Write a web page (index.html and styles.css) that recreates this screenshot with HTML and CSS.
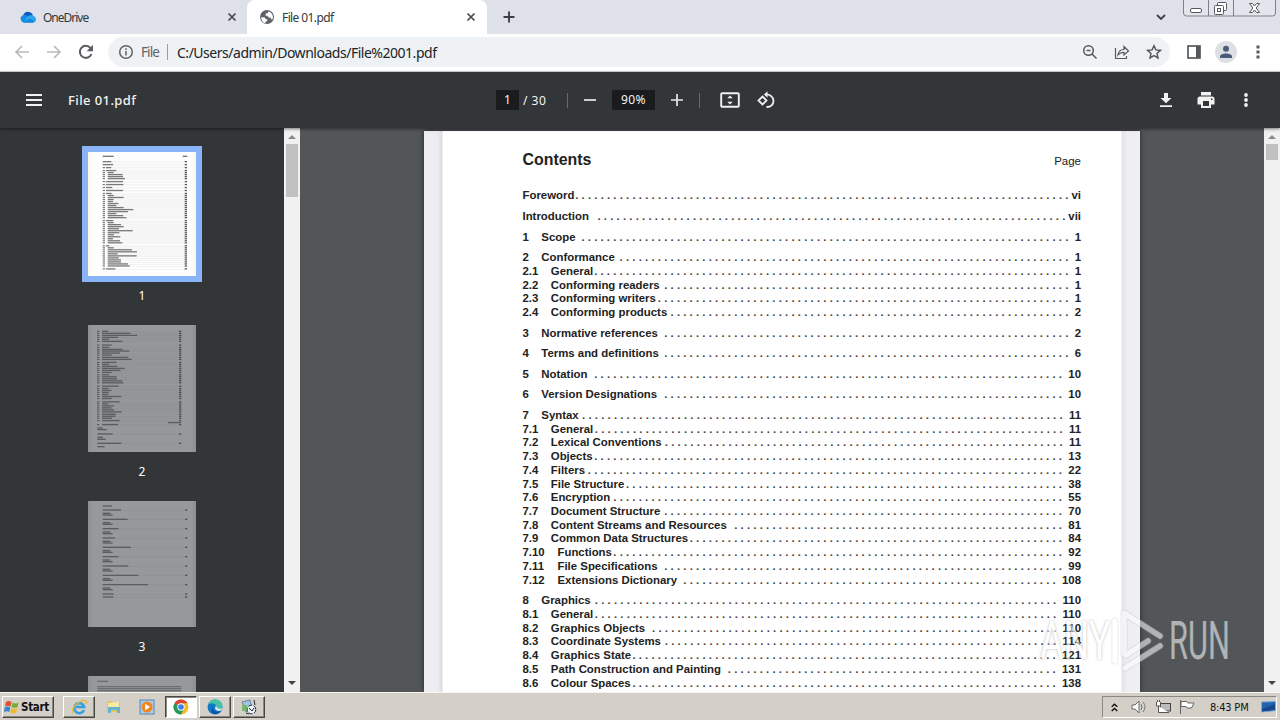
FILE: index.html
```html
<!DOCTYPE html>
<html lang="en">
<head>
<meta charset="utf-8">
<title>File 01.pdf</title>
<link rel="stylesheet" href="styles.css">
</head>
<body>
<div class="screen">
  <header class="tabs">
    <div class="tab tab-idle">
      <svg class="i16" viewBox="0 0 16 16"><path d="M3 7C4 2 10 1 13 6l-7 7z" fill="#0a5dbb"/><path d="M1 11c-2-4 4-7 7-3l5 5.500H4C2.500 13.500 1.400 12.500 1 11z" fill="#168ce0"/><path d="M7 8c3-3.500 9-1 9 2.500 0 2-1.300 3-3 3H4z" fill="#2aa7ee"/><path d="M3 13L10 9.500l5 3-2 1H4z" fill="#1489dc"/></svg>
      <span class="tab-title od">OneDrive</span>
      <svg class="x" viewBox="0 0 10 10"><path d="M1.500 1.500l7 7m0-7l-7 7"/></svg>
    </div>
    <div class="tab tab-active">
      <svg class="i16" viewBox="0 0 16 16"><circle cx="8" cy="8" r="7" fill="#5f6368"/><path d="M2.200 8.200L6 8.500l.5 1.500 2 .5-.3 1.500-1.700.8v1.400A6 6 0 0 1 2.200 8.200zM9.500 2.300L9 4 6.800 4.500 6.500 6.500 8.600 7l1 1.400 1.900.2 1 1.800 1 .1A6.200 6.200 0 0 0 9.500 2.300z" fill="#fff"/></svg>
      <span class="tab-title">File 01.pdf</span>
      <svg class="x" viewBox="0 0 10 10"><path d="M1.500 1.500l7 7m0-7l-7 7"/></svg>
    </div>
    <svg class="plus" viewBox="0 0 12 12"><path d="M6 .5v11M.5 6h11"/></svg>
    <svg class="chev" viewBox="0 0 10 6"><path d="M1 1l4 4 4-4"/></svg>
    <svg class="winctl" viewBox="0 0 94 17"><path d="M.5 0v13q0 3 3 3h86q3 0 3-3V0M25.500 0v16M50.500 0v16" fill="#e2e5eb" stroke="#7d8188"/><g fill="#fff" stroke="#55585e"><rect x="7.500" y="8.500" width="11" height="4" rx="1.500"/><rect x="34.500" y="2.500" width="9" height="8" rx="1"/><rect x="31.500" y="5.500" width="9" height="9" rx="1"/><rect x="34.500" y="8.500" width="3" height="3"/><path d="M66.500 3.500h3l2 2.500 2-2.500h3l-3.300 4.500 3.300 4.500h-3l-2-2.500-2 2.500h-3l3.300-4.500z"/></g></svg>
  </header>

  <nav class="address">
    <svg class="nav" viewBox="0 0 16 16"><path d="M15 8H2m6-6L2 8l6 6" stroke="#b8babd"/></svg>
    <svg class="nav" viewBox="0 0 16 16"><path d="M1 8h13M8 2l6 6-6 6" stroke="#b8babd"/></svg>
    <svg class="nav" viewBox="0 0 16 16"><path d="M13.500 10A6 6 0 1 1 12.500 4L14 5.500" stroke="#5a5e63" stroke-width="2"/><path d="M15 .8v6.400H8.700z" fill="#5a5e63"/></svg>
    <div class="omni">
      <svg class="info" viewBox="0 0 16 16"><circle cx="8" cy="8" r="6.300"/><path d="M8 7v4.600M8 4.300v1.600"/></svg>
      <span class="scheme">File</span><i class="bar"></i><span class="url">C:/Users/admin/Downloads/File%2001.pdf</span>
      <svg class="oi" viewBox="0 0 16 16"><circle cx="6.500" cy="6.500" r="4.800"/><path d="M10 10l4.500 4.500M4.500 6.500h4"/></svg>
      <svg class="oi" viewBox="0 0 16 16"><path d="M1.500 4v10.500h11V12M4 11c.5-4 2.500-5.500 6-5.500v-3l4.500 4.500L10 11V8.300c-3 0-4.500.7-6 2.700z" stroke-width="1.200"/></svg>
      <svg class="oi" viewBox="0 0 16 16"><path d="M8 1.800l1.900 4.100 4.500.5-3.400 3 1 4.500L8 11.600l-4 2.300 1-4.500-3.400-3 4.500-.5z"/></svg>
    </div>
    <svg class="side-i" viewBox="0 0 14 14"><rect x="1" y="1" width="12" height="12" fill="none" stroke="#55595e" stroke-width="1.700"/><path d="M9 1h4v12H9z" fill="#55595e"/></svg>
    <svg class="avatar" viewBox="0 0 22 22"><circle cx="11" cy="11" r="11" fill="#dcdfe4"/><circle cx="11" cy="7.800" r="3" fill="#4b5b7c"/><path d="M5 17v-1.500c0-4 12-4 12 0V17z" fill="#4b5b7c"/></svg>
    <svg class="dots" viewBox="0 0 4 14"><path d="M.5.500h3v3h-3zM.5 5.500h3v3h-3zM.5 10.500h3v3h-3z" fill="#55595e"/></svg>
  </nav>

  <div class="pdfbar">
    <svg class="menu" viewBox="0 0 16 12"><path d="M0 1h16M0 6h16M0 11h16"/></svg>
    <b class="fname">File 01.pdf</b>
    <div class="center">
      <span class="box pg">1</span><span class="total">/ 30</span><i class="sep s1"></i>
      <svg class="minus" viewBox="0 0 12 12"><path d="M0 6h12"/></svg>
      <span class="box zm">90%</span>
      <svg class="add" viewBox="0 0 12 12"><path d="M0 6h12M6 0v12"/></svg><i class="sep s2"></i>
      <svg class="fit" viewBox="0 0 20 16"><rect x="1.200" y="1.200" width="17.600" height="13.600" rx="1" fill="none" stroke="#f1f1f1" stroke-width="1.900"/><path d="M7.300 6.300L10 3.500l2.700 2.800zM7.300 9.700L10 12.500l2.700-2.800z" fill="#f1f1f1"/></svg>
      <svg class="rot" viewBox="0 0 18 18"><path d="M5.500 5.500l4 4-4 4-4-4zM8 3.500c11-1 11 13 1.500 12.500" fill="none" stroke="#f1f1f1" stroke-width="1.800"/><path d="M10.500.2v6.600L7 3.500z" fill="#f1f1f1"/></svg>
    </div>
    <svg class="dl" viewBox="0 0 12 14"><path d="M4 0h4v5h3.500L6 10.300.500 5H4zM0 12.200h12V14H0z"/></svg>
    <svg class="pr" viewBox="0 0 18 16"><path d="M4 0h10v3.500H4z"/><path fill-rule="evenodd" d="M3 4.500h12a2.500 2.500 0 0 1 2.500 2.500v5.500H14V16H4v-3.500H.5V7A2.500 2.500 0 0 1 3 4.500zM6 9v5h6V9zm8-2.500v1.500h1.500V6.500z"/></svg>
    <svg class="more" viewBox="0 0 4 14"><circle cx="2" cy="2" r="1.900"/><circle cx="2" cy="7" r="1.900"/><circle cx="2" cy="12" r="1.900"/></svg>
  </div>

  <main class="main">
    <aside class="thumbs">
      <div class="thumb selected"><svg id="t1" viewBox="54 51 324 372"></svg></div><span class="num">1</span>
      <div class="thumb dim"><svg id="t2" viewBox="54 30 324 380" preserveAspectRatio="none"></svg></div><span class="num">2</span>
      <div class="thumb dim third"><svg id="t3" viewBox="54 33 324 378"></svg></div><span class="num">3</span>
      <div class="thumb dim fourth"><svg id="t4" viewBox="54 558 324 378"></svg></div>
    </aside>
    <div class="scroll">
      <svg class="arr" viewBox="0 0 8 4"><path d="M0 4l4-4 4 4z" fill="#8b8b8b"/></svg><i class="grip tall"></i>
      <svg class="arr down" viewBox="0 0 8 4"><path d="M0 0l4 4 4-4z" fill="#444"/></svg>
    </div>
    <section class="viewer">
      <article class="page">
        <div class="head"><b>Contents</b><span>Page</span></div>
        <div id="toc" class="toc"></div>
      </article>
    </section>
    <div class="scroll">
      <svg class="arr" viewBox="0 0 8 4"><path d="M0 4l4-4 4 4z" fill="#8b8b8b"/></svg><i class="grip short"></i>
      <svg class="arr down" viewBox="0 0 8 4"><path d="M0 0l4 4 4-4z" fill="#444"/></svg>
    </div>
    <div class="mark">
      <span class="any">ANY</span>
      <svg viewBox="0 0 54 66"><g fill="none" stroke-linecap="round" stroke-linejoin="round"><path d="M4 13v40M13 46V5l36 23M14 60l35-22M15 47l22-14" stroke="#a9abb0" stroke-width="7" opacity=".5"/><path d="M4 13v40M13 46V5l36 23M14 60l35-22M15 47l22-14" stroke="#fff" stroke-width="5.500"/></g></svg>
      <span class="run">RUN</span>
    </div>
  </main>

  <footer class="taskbar">
    <div class="btn start"><svg viewBox="0 0 16 16"><path d="M2 3q3-2 5.500 0L6.500 7.500Q4 6 1 7.500z" fill="#df5030"/><path d="M8.500 3.500q3 2 6 0l-1 4.500q-3 1.500-6 0z" fill="#74ac35"/><path d="M.8 8.500q3-1.800 5.500 0l-1 4.500Q3 11.500 0 13z" fill="#3b82cc"/><path d="M7.300 9q3 1.700 6 0l-1 4.500q-3 1.700-6 0z" fill="#f0b82c"/></svg><b>Start</b></div>
    <div class="btn ie"><svg viewBox="0 0 16 16"><path d="M13 11A5 5 0 1 1 13.200 8H5" fill="none" stroke="#35a2df" stroke-width="2.600"/><path d="M2 14C-2 10 10 0 15 2c1 .5.500 2 0 3" fill="none" stroke="#e7b936" stroke-width="1.300"/></svg></div>
    <div class="plain fo"><svg viewBox="0 0 16 16"><path d="M1 2h5l1 2h7v9H1z" fill="#e3c45b"/><path d="M2 4l11-1v7H2z" fill="#f7eaa0"/><path d="M2 8h12v6h-3v-3H5v3H2z" fill="#65b4cf"/></svg></div>
    <div class="plain wm"><svg viewBox="0 0 16 16"><rect x="1" y="1" width="14" height="14" fill="#a9cce8" stroke="#5388b9"/><circle cx="8" cy="8" r="5.500" fill="#ee8622"/><path d="M6.200 4.700L11 8l-4.800 3.300z" fill="#fff"/></svg></div>
    <div class="btn on"><svg viewBox="0 0 16 16"><circle cx="8" cy="8" r="7.500" fill="#f2bd22"/><path d="M8 8L1.500 4.250A7.500 7.500 0 0 1 14.500 4.250H8z" fill="#db4437"/><path d="M8 8l-6.500-3.750A7.500 7.500 0 0 0 8 15.500L11 10z" fill="#25995a"/><circle cx="8" cy="8" r="3.700" fill="#fff"/><circle cx="8" cy="8" r="2.800" fill="#3e7de8"/></svg></div>
    <div class="btn"><svg viewBox="0 0 16 16"><circle cx="8" cy="8" r="7.500" fill="#1177c8"/><path d="M.8 6C3-2 15-1 15.500 6.500c0 4-5 4-6 2.500 1-4-5-6-8.700-3z" fill="#43c2a5"/><path d="M6 7c-2 5 4 7 8 5-5 6-13 2-8-5z" fill="#0a4f9e"/><path d="M9.300 6.500c0 3 3 4 6 2.500l-1 2.500C10 13 6 10 9.300 6.500z" fill="#d9e7e7"/></svg></div>
    <div class="btn last"><svg viewBox="0 0 16 16"><path d="M1 3l8-2 2 9-6 3z" fill="#9cc6e6" stroke="#6d8199"/><path d="M1 6h5v6H1z" fill="#75b968"/><circle cx="10.500" cy="10.500" r="4.300" fill="#eef4f8" stroke="#222b38" stroke-dasharray="4 1.500"/><path d="M8 9l3 3 2-3M13 1l1 5M5 14l3 1" stroke="#222b38" fill="none"/></svg></div>
    <div class="tray">
      <svg class="up" viewBox="0 0 7 9"><path d="M.7 3.700l2.800-2.500 2.800 2.500M.7 8l2.800-2.500L6.300 8" fill="none" stroke="#111" stroke-width="1.400"/></svg>
      <svg class="t" viewBox="0 0 16 16"><path d="M1 6h3l4-4v12l-4-4H1z" fill="#fff" stroke="#666"/><path d="M10 5q2 3 0 6M12 3q4 5 0 10" fill="none" stroke="#777"/></svg>
      <svg class="t" viewBox="0 0 16 16"><rect x="5.500" y="4.500" width="10" height="7.500" fill="#bbb" stroke="#444"/><path d="M1.500 3v4h4V3M2.500 1v2M4.500 1v2M3.500 7v6.500H14" fill="#fff" stroke="#555"/></svg>
      <svg class="t" viewBox="0 0 16 16"><path d="M1.500 1v14M2 2.500h6L9 4h6l-2.500 5H8L7 7.500H2z" fill="#fff" stroke="#666"/></svg>
      <span class="clock">8:43 PM</span>
      <svg class="desk" viewBox="0 0 15 12"><path d="M.5 1L14.500.5v9L.5 11z" fill="#2263ae" stroke="#78a9d9"/><path d="M1 8l13-5v6L1 10.500z" fill="#17488f"/></svg>
    </div>
  </footer>
</div>
<script src="app.js"></script>
</body>
</html>
```
FILE: styles.css
```css
* { box-sizing: border-box; }
body { margin: 0; background: #525659; }
svg { display: block; flex: none; }
i { display: block; flex: none; }
.screen { width: 1280px; height: 720px; overflow: hidden; display: grid; grid-template-rows: 34px 38px 56px 564px 28px; font-family: "Noto Sans", "Open Sans", sans-serif; }

.tabs { position: relative; background: #dee1e9; display: flex; align-items: center; }
.tab { height: 34px; display: flex; align-items: center; font-size: 12px; color: #34373b; }
.tab-idle { width: 247px; padding: 0 10px 0 20px; }
.tab-active { width: 240px; padding: 0 11px 0 12px; background: #fff; border-radius: 8px 8px 0 0; }
.i16 { width: 16px; height: 16px; }
.tab-title { flex: 1; margin-left: 7px; letter-spacing: -.6px; white-space: nowrap; }
.od { letter-spacing: -1px; }
.x { width: 10px; height: 10px; fill: none; stroke: #45484d; stroke-width: 1.7; }
.plus { width: 12px; height: 12px; margin-left: 16px; stroke: #3c4045; stroke-width: 1.9; }
.chev { width: 10px; height: 6px; margin-left: 641px; fill: none; stroke: #3c4045; stroke-width: 1.8; }
.winctl { position: absolute; left: 1183px; top: 0; width: 94px; height: 17px; }

.address { background: #fff; border-bottom: 1px solid #d5d8dc; display: flex; align-items: center; padding: 0 0 1px 14px; }
.nav { width: 16px; height: 16px; margin-right: 16px; fill: none; stroke-width: 1.7; }
.omni { width: 1062px; height: 30px; margin-left: -2px; border-radius: 15px; background: #eff2f5; display: flex; align-items: center; padding: 0 8px 0 10px; font-size: 14px; white-space: nowrap; }
.info { width: 16px; height: 16px; fill: none; stroke: #5f6368; stroke-width: 1.5; }
.scheme { width: 26px; margin-left: 7px; font-size: 13.500px; letter-spacing: -.9px; color: #606468; }
.bar { width: 1px; height: 16px; background: #999ca0; }
.url { flex: 1; margin-left: 9px; letter-spacing: -.48px; color: #202327; }
.oi { width: 16px; height: 16px; margin-left: 16px; fill: none; stroke: #55595e; stroke-width: 1.5; }
.side-i { width: 14px; height: 14px; margin-left: 17px; }
.avatar { width: 22px; height: 22px; margin-left: 14px; }
.dots { width: 4px; height: 14px; margin-left: 19px; }

.pdfbar { position: relative; z-index: 2; background: #323639; color: #f4f4f4; display: flex; align-items: center; padding-left: 26px; box-shadow: 0 1px 3px rgba(0,0,0,.5); }
.menu { width: 16px; height: 12px; stroke: #f1f1f1; stroke-width: 2; }
.fname { width: 428px; margin-left: 26px; font-size: 13px; font-weight: 500; letter-spacing: .4px; }
.center { width: 662px; display: flex; align-items: center; font-size: 12px; }
.box { height: 20px; line-height: 20px; background: #191b1d; text-align: center; }
.pg { width: 23px; }
.total { width: 44px; margin-left: 4px; letter-spacing: .5px; }
.sep { width: 1px; height: 15px; background: #666a6d; }
.minus { width: 12px; height: 12px; margin: 0 16px; stroke: #e8e8e8; stroke-width: 1.7; }
.zm { width: 43px; letter-spacing: .4px; }
.add { width: 12px; height: 12px; margin: 0 16px; stroke: #e8e8e8; stroke-width: 1.7; }
.fit { width: 20px; height: 16px; margin-left: 20px; }
.rot { width: 18px; height: 18px; margin-left: 17px; }
.dl, .pr, .more { fill: #f1f1f1; }
.dl { width: 12px; height: 14px; margin-left: 2px; }
.pr { width: 18px; height: 16px; margin-left: 25px; }
.more { width: 4px; height: 14px; margin-left: 29px; }

.main { position: relative; display: flex; min-height: 0; overflow: hidden; }
.thumbs { width: 284px; height: 564px; background: #323639; overflow: hidden; display: flex; flex-direction: column; align-items: center; padding-top: 18px; color: #fff; }
.thumb { flex: none; width: 108px; background: #fdfdfd; }
.thumb svg { width: 100%; height: 100%; }
.selected { width: 120px; height: 136px; border: 6px solid #8ab4f8; }
.dim { height: 127px; background: #96999b; }
.third { height: 126px; }
.num { flex: none; height: 43px; line-height: 28px; padding-bottom: 15px; font-size: 12px; }
.dim + .num { height: 49px; line-height: 40px; padding-bottom: 9px; }
.fourth { height: 126px; }

.scroll { flex: none; width: 16px; background: #f1f1f1; display: flex; flex-direction: column; align-items: center; padding: 7px 0; }
.arr { width: 8px; height: 4px; }
.grip { width: 12px; background: #c1c1c1; margin-top: 5px; }
.tall { height: 53px; }
.short { height: 16px; }
.down { margin-top: auto; }

.viewer { width: 964px; background: #525659; padding: 3px 0 0 124px; overflow: hidden; }
.page { width: 716px; height: 561px; overflow: hidden; padding: 0 59px 0 98.500px; background: linear-gradient(90deg, #ededf2 0, #ececf2 14px, #dadae1 18px, #fff 19px, #fff 697px, #e3e3e9 698px, #ededf2 703px, #efeff4 716px); box-shadow: 0 0 5px rgba(0,0,0,.55); font-family: "Liberation Sans", Arial, sans-serif; color: #222; }
.head { display: flex; justify-content: space-between; align-items: baseline; padding-top: 19px; line-height: 20px; height: 51.500px; font-size: 15.900px; }
.head span { font-size: 11.500px; }
.toc { font-size: 11.400px; font-weight: 700; line-height: 13.720px; }
.row { display: flex; height: 13.720px; white-space: pre; }
.gap { margin-top: 6.880px; }
.sec { width: 18.800px; }
.sub { width: 28.300px; }
.deep { width: 35px; }
.leader { flex: 1; text-align: right; margin-right: 6.300px; min-width: 0; letter-spacing: .018px; color: #444; }
.roman .leader { margin-right: 3px; }

.mark { position: absolute; z-index: 3; left: 1040px; top: 480px; height: 66px; display: flex; align-items: center; font: 53px/66px "Roboto", sans-serif; opacity: .55; color: #fff; }
.any { width: 71px; transform: scaleX(.68); transform-origin: left; text-shadow: 0 0 3px #777; }
.mark svg { width: 54px; height: 66px; }
.run { width: 60px; margin-left: 4px; transform: scaleX(.58); transform-origin: left; }

.taskbar { position: relative; z-index: 4; background: #d4d0c8; border-top: 1px solid #f5f4f0; display: flex; align-items: flex-start; padding: 3px 3px 0 2px; }
.btn, .plain { height: 22px; display: flex; align-items: center; justify-content: center; flex: none; }
.btn { width: 32px; margin-right: 2px; border: 1px solid; border-color: #fff #484641 #484641 #fff; box-shadow: inset -1px -1px 0 #8c8982; }
.btn svg, .plain svg { width: 16px; height: 16px; }
.start { width: 52px; justify-content: flex-start; padding-left: 1px; margin-right: 9px; font: 11.500px "DejaVu Sans Condensed", "DejaVu Sans", sans-serif; color: #111; }
.start b { letter-spacing: -.3px; margin-left: 1px; }
.plain { width: 34px; }
.plain.wm { padding-right: 2px; }
.btn.on { background: #fff; border-color: #484641 #fff #fff #484641; box-shadow: inset 1px 1px 0 #8c8982; }
.tray { width: 175px; height: 22px; margin-left: auto; border: 1px solid; border-color: #8c8982 #fff #fff #8c8982; display: flex; align-items: center; padding-left: 8px; }
.up { width: 7px; height: 9px; margin-right: 13px; }
.t { width: 16px; height: 16px; margin-right: 8px; }
.clock { width: 43px; margin-left: 7px; font: 11px "DejaVu Sans Condensed", "DejaVu Sans", sans-serif; letter-spacing: -.2px; white-space: nowrap; color: #111; }
.desk { width: 15px; height: 12px; margin-left: 8px; }
```
FILE: app.js
```js
const toc = [
  ['', 'Foreword', 'vi'], ['', 'Introduction', 'vii', 1], ['1', 'Scope', '1'],
  ['2', 'Conformance', '1'], ['2.1', 'General', '1'], ['2.2', 'Conforming readers', '1'],
  ['2.3', 'Conforming writers', '1'], ['2.4', 'Conforming products', '2'],
  ['3', 'Normative references', '2'], ['4', 'Terms and definitions', '6'],
  ['5', 'Notation', '10'], ['6', 'Version Designations', '10', 1], ['7', 'Syntax', '11'],
  ['7.1', 'General', '11'], ['7.2', 'Lexical Conventions', '11'], ['7.3', 'Objects', '13'],
  ['7.4', 'Filters', '22'], ['7.5', 'File Structure', '38'], ['7.6', 'Encryption', '55'],
  ['7.7', 'Document Structure', '70'], ['7.8', 'Content Streams and Resources', '81', 1],
  ['7.9', 'Common Data Structures', '84'], ['7.10', 'Functions', '92'],
  ['7.11', 'File Specifications', '99'], ['7.12', 'Extensions Dictionary', '108'],
  ['8', 'Graphics', '110'], ['8.1', 'General', '110'], ['8.2', 'Graphics Objects', '110', 1],
  ['8.3', 'Coordinate Systems', '114'], ['8.4', 'Graphics State', '121'],
  ['8.5', 'Path Construction and Painting', '131', 1], ['8.6', 'Colour Spaces', '138']
];
const list = document.getElementById('toc');
// The optional fourth value is the number of leader dots left out after the title
for (const [n, title, page, skip = 0] of toc) {
  const row = document.createElement('div');
  row.className = 'row' + (n.includes('.') ? '' : ' gap') + (n ? '' : ' roman');
  const cls = n.length > 3 ? 'deep' : n.length > 1 ? 'sub' : 'sec';
  row.innerHTML = (n ? `<span class="${cls}">${n}</span>` : '') + `<span>${title}</span><span class="leader"></span><span>${page}</span>`;
  list.appendChild(row);
  const leader = row.querySelector('.leader');
  if (page === 'vii') leader.style.marginRight = '3px';
  const count = Math.floor((leader.getBoundingClientRect().width + 3.4) / 6.374) - skip;
  leader.textContent = Array(count).fill('.').join(' ');
}

// Thumbnail rows: [y, start, end, has page number]
function draw(id, rows, right, ink, tint) {
  let s = `<path d="M54 0h8v950h-8zM369 0h9v950h-9z" fill="${tint}"/>`;
  for (const [y, a, b, numbered] of rows) {
    if ((a > 99 || a === 96) && numbered) s += `<path d="M${right - 253} ${y}h7" stroke="${ink}" stroke-width="3.500" opacity=".65"/>`;
    s += `<path d="M${a} ${y}H${b}" stroke="${ink}" stroke-width="4" opacity=".65"/>`;
    if (numbered) s += `<path d="M${b} ${y + 1}H${right - 8}" stroke="${ink}" stroke-width="1.5" opacity=".13"/><path d="M${right - 7} ${y}h7" stroke="${ink}" stroke-width="4" opacity=".8"/>`;
  }
  document.getElementById(id).innerHTML = s;
}
const one = [[64, 98, 131, 0], [64, 338, 352, 0]];
const ends1 = [124,129,124,139,131,158,159,165,159,160,127,159,125,131,161,131,129,145,139,161,190,174,139,160,169,130,131,153,161,147,188,148,132,151,129,150,157,118,131,186,201,143,200,146,153,153,174,179,136];
let y = 80;
const breaks = [1,2,3,8,9,10,11,12,25,37,48];
ends1.forEach((e, i) => { if (i) y += breaks.includes(i) ? 8.900 : 6.050; one.push([y, i < 2 ? 98 : breaks.includes(i) ? 108 : 113, e, 1]); });
draw('t1', one, 351, '#333', '#fff8e8');

const two = [];
const ys2 = [49,55,61,67,73,79,90,97,103,108,114,120,127,133,142,148,154,160,166,172,179,185,191,197,203,213,220,226,232,238,244,250,260,266,272,278,284,290,297,303,309,316,328,356,384];
const ends2 = [115,181,201,144,117,157,125,117,157,178,150,125,175,185,139,117,142,164,151,125,117,140,141,157,160,146,116,124,116,115,154,125,149,115,132,124,132,155,137,137,126,149,144,128,154];
ys2.forEach((v, i) => two.push([v, i > 42 ? 82 : 96, ends2[i], 1]));
two.push([322, 294, 333, 0], [338, 82, 98, 0], [343, 82, 110, 0], [366, 82, 98, 0], [372, 82, 107, 0], [394, 82, 104, 0]);
draw('t2', two, 334, '#3b3d40', '#8f9294');

const three = [[48, 98, 126, 0]];
[[60,153],[88,173],[116,146],[144,135],[172,183],[200,145],[228,175],[256,205],[284,234]].forEach(([v, e]) => {
  three.push([v, 98, e, 1], [v + 10, 98, 121, 0], [v + 15, 98, 128, 0]);
});
three.push([312, 98, 131, 1], [321, 98, 130, 1]);
draw('t3', three, 352, '#3b3d40', '#8f9294');
draw('t4', [[574, 82, 115, 0], [590, 82, 334, 0], [596, 82, 334, 0], [602, 82, 334, 0]], 334, '#55585b', '#8f9294');
```
